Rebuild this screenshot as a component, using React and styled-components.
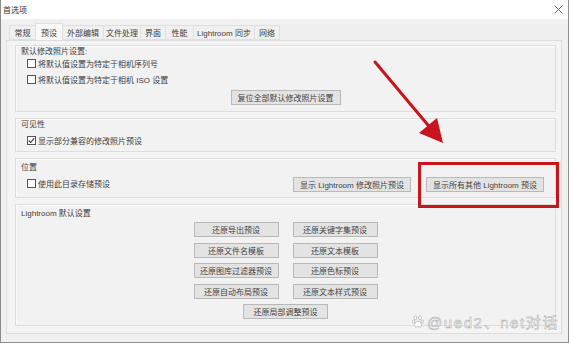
import React from "react";
import styled, { createGlobalStyle } from "styled-components";

const GlobalStyle = createGlobalStyle`
  html, body {
    margin: 0;
    padding: 0;
    background: #ffffff;
  }
  * {
    box-sizing: border-box;
  }
`;

const Window = styled.div`
  position: relative;
  width: 569px;
  height: 343px;
  border: 1px solid #8c8c8c;
  border-top: none;
  background: #f0f0f0;
  display: flex;
  flex-direction: column;
  font-family: "Liberation Sans", "Noto Sans CJK SC", sans-serif;
  font-size: 8px;
  color: #404040;
  overflow: hidden;
`;

const TitleBar = styled.div`
  height: 19px;
  background: #ffffff;
  display: flex;
  align-items: center;
  justify-content: space-between;
  padding: 0 4px 0 2px;
  font-size: 8px;
  color: #333;
`;

const CloseBtn = styled.svg`
  width: 9px;
  height: 9px;
  margin-right: 1px;
`;

const Body = styled.div`
  flex: 1;
  display: flex;
  flex-direction: column;
  padding: 6px 6px 8px 5px;
`;

const TabStrip = styled.div`
  display: flex;
  height: 15px;
  margin-left: 4px;
  position: relative;
  z-index: 1;
`;

const Tab = styled.div`
  width: ${(p) => p.$w}px;
  height: ${(p) => (p.$active ? 17 : 15)}px;
  margin-top: ${(p) => (p.$active ? -2 : 0)}px;
  display: flex;
  align-items: center;
  justify-content: center;
  white-space: nowrap;
  background: ${(p) => (p.$active ? "#f9f9f9" : "#f0f0f0")};
  border: 1px solid #e0e0e0;
  border-bottom: ${(p) => (p.$active ? "none" : "1px solid #e0e0e0")};
  margin-left: -1px;
`;

const Panel = styled.div`
  flex: 1;
  background: #f4f4f4;
  border: 1px solid #dedede;
  padding: 4px 5px 0 8px;
  display: flex;
  flex-direction: column;
  gap: 6px;
`;

const Group = styled.div`
  border: 1px solid #dddddd;
  box-shadow: inset 1px 1px 0 #fbfbfb;
  background: #f2f2f2;
  padding: ${(p) => p.$pt}px 10px ${(p) => p.$pb}px 5px;
  display: flex;
  flex-direction: column;
`;

const GroupTitle = styled.div`
  height: 11px;
  line-height: 11px;
  white-space: nowrap;
`;

const CheckRow = styled.div`
  display: flex;
  align-items: center;
  gap: 2px;
  height: 13px;
  margin-left: 6px;
  margin-top: ${(p) => p.$mt || 0}px;
  white-space: nowrap;
`;

const Box = styled.span`
  width: 9px;
  height: 9px;
  border: 1px solid #555555;
  background: #ffffff;
  display: inline-flex;
  align-items: center;
  justify-content: center;
  flex-shrink: 0;
`;

const Button = styled.div`
  height: 15px;
  width: ${(p) => (p.$w ? `${p.$w}px` : "auto")};
  padding: 0 6px;
  border: 1px solid #b9b9b9;
  background: #e3e3e3;
  display: flex;
  align-items: center;
  justify-content: center;
  white-space: nowrap;
  color: #444;
`;

const CenterRow = styled.div`
  display: flex;
  justify-content: center;
  margin-top: ${(p) => p.$mt}px;
  padding-left: 5px;
`;

const SplitRow = styled.div`
  display: flex;
  align-items: flex-start;
  justify-content: space-between;
  margin-top: 4px;
`;

const ButtonPair = styled.div`
  display: flex;
  gap: 15px;
  margin-right: 1px;
`;

const ButtonGrid = styled.div`
  display: grid;
  grid-template-columns: 85px 85px;
  column-gap: 14px;
  row-gap: 5.5px;
  justify-content: center;
  margin-top: 3px;
  padding-left: 5px;
`;

const LastCell = styled.div`
  grid-column: 1 / span 2;
  display: flex;
  justify-content: center;
`;

const Overlay = styled.svg`
  position: absolute;
  left: -1px;
  top: 0;
  width: 569px;
  height: 343px;
  pointer-events: none;
`;

const Watermark = styled.div`
  position: absolute;
  right: 9px;
  bottom: 10px;
  display: flex;
  align-items: center;
  gap: 3px;
  font-family: "Liberation Sans", "Noto Sans CJK SC", sans-serif;
  font-size: 15px;
  letter-spacing: 1.6px;
  color: rgba(255, 255, 255, 0.9);
  -webkit-text-stroke: 0.5px #aaaaaa;
  pointer-events: none;
`;

const tabs = [
  { label: "常规", w: 27 },
  { label: "预设", w: 28, active: true },
  { label: "外部编辑", w: 42 },
  { label: "文件处理", w: 38 },
  { label: "界面", w: 26 },
  { label: "性能", w: 29 },
  { label: "Lightroom 同步", w: 62 },
  { label: "网络", w: 26 },
];

const restoreButtons = [
  "还原导出预设",
  "还原关键字集预设",
  "还原文件名模板",
  "还原文本模板",
  "还原图库过滤器预设",
  "还原色标预设",
  "还原自动布局预设",
  "还原文本样式预设",
];

const CheckBox = ({ checked, label, mt }) => (
  <CheckRow $mt={mt}>
    <Box>
      {checked && (
        <svg width="7" height="7" viewBox="0 0 7 7">
          <polyline points="0.8,3.6 2.7,5.5 6.2,1.2" fill="none" stroke="#333" strokeWidth="1.1" />
        </svg>
      )}
    </Box>
    <span>{label}</span>
  </CheckRow>
);

const App = () => {
  return (
    <>
      <GlobalStyle />
      <Window>
        <TitleBar>
          <span>首选项</span>
          <CloseBtn viewBox="0 0 9 9">
            <path d="M0.5 0.5 L8.5 8.5 M8.5 0.5 L0.5 8.5" stroke="#555" strokeWidth="0.9" />
          </CloseBtn>
        </TitleBar>
        <Body>
          <TabStrip>
            {tabs.map((t) => (
              <Tab key={t.label} $w={t.w} $active={t.active}>
                {t.label}
              </Tab>
            ))}
          </TabStrip>
          <Panel>
            <Group $pt={0} $pb={6}>
              <GroupTitle>默认修改照片设置:</GroupTitle>
              <CheckBox label="将默认值设置为特定于相机序列号" />
              <CheckBox label="将默认值设置为特定于相机 ISO 设置" mt={3} />
              <CenterRow $mt={4}>
                <Button>复位全部默认修改照片设置</Button>
              </CenterRow>
            </Group>
            <Group $pt={0} $pb={4}>
              <GroupTitle>可见性</GroupTitle>
              <CheckBox checked label="显示部分兼容的修改照片预设" mt={4} />
            </Group>
            <Group $pt={3} $pb={5}>
              <GroupTitle>位置</GroupTitle>
              <SplitRow>
                <CheckBox label="使用此目录存储预设" />
                <ButtonPair>
                  <Button>显示 Lightroom 修改照片预设</Button>
                  <Button>显示所有其他 Lightroom 预设</Button>
                </ButtonPair>
              </SplitRow>
            </Group>
            <Group $pt={3} $pb={6}>
              <GroupTitle>Lightroom 默认设置</GroupTitle>
              <ButtonGrid>
                {restoreButtons.map((b) => (
                  <Button key={b}>{b}</Button>
                ))}
                <LastCell>
                  <Button $w={85}>还原局部调整预设</Button>
                </LastCell>
              </ButtonGrid>
            </Group>
          </Panel>
        </Body>

        <Overlay viewBox="0 0 569 343">
          <line x1="375" y1="62" x2="430" y2="127.5" stroke="#c8141c" strokeWidth="3" strokeLinecap="round" />
          <polygon points="443,143 419,133 437,118" fill="#c8141c" />
          <rect x="419.5" y="163.5" width="138" height="43" fill="none" stroke="#c8141c" strokeWidth="3" />
        </Overlay>

        <Watermark>
          <svg width="12" height="13" viewBox="0 0 12 13">
            <g fill="#ffffff" stroke="#aaaaaa" strokeWidth="0.7">
              <ellipse cx="3.5" cy="2.8" rx="1.4" ry="1.8" />
              <ellipse cx="8" cy="2.8" rx="1.4" ry="1.8" />
              <ellipse cx="1.6" cy="6.5" rx="1.2" ry="1.6" />
              <ellipse cx="10.2" cy="6.5" rx="1.2" ry="1.6" />
              <path d="M6 6.2 C3.6 6.2 2.4 9.2 2.6 10.8 C2.8 12.3 4.6 12 6 11.6 C7.4 12 9.2 12.3 9.4 10.8 C9.6 9.2 8.4 6.2 6 6.2 Z" />
            </g>
          </svg>
          <span>@ued2、net对话</span>
        </Watermark>
      </Window>
    </>
  );
};

export default App;
